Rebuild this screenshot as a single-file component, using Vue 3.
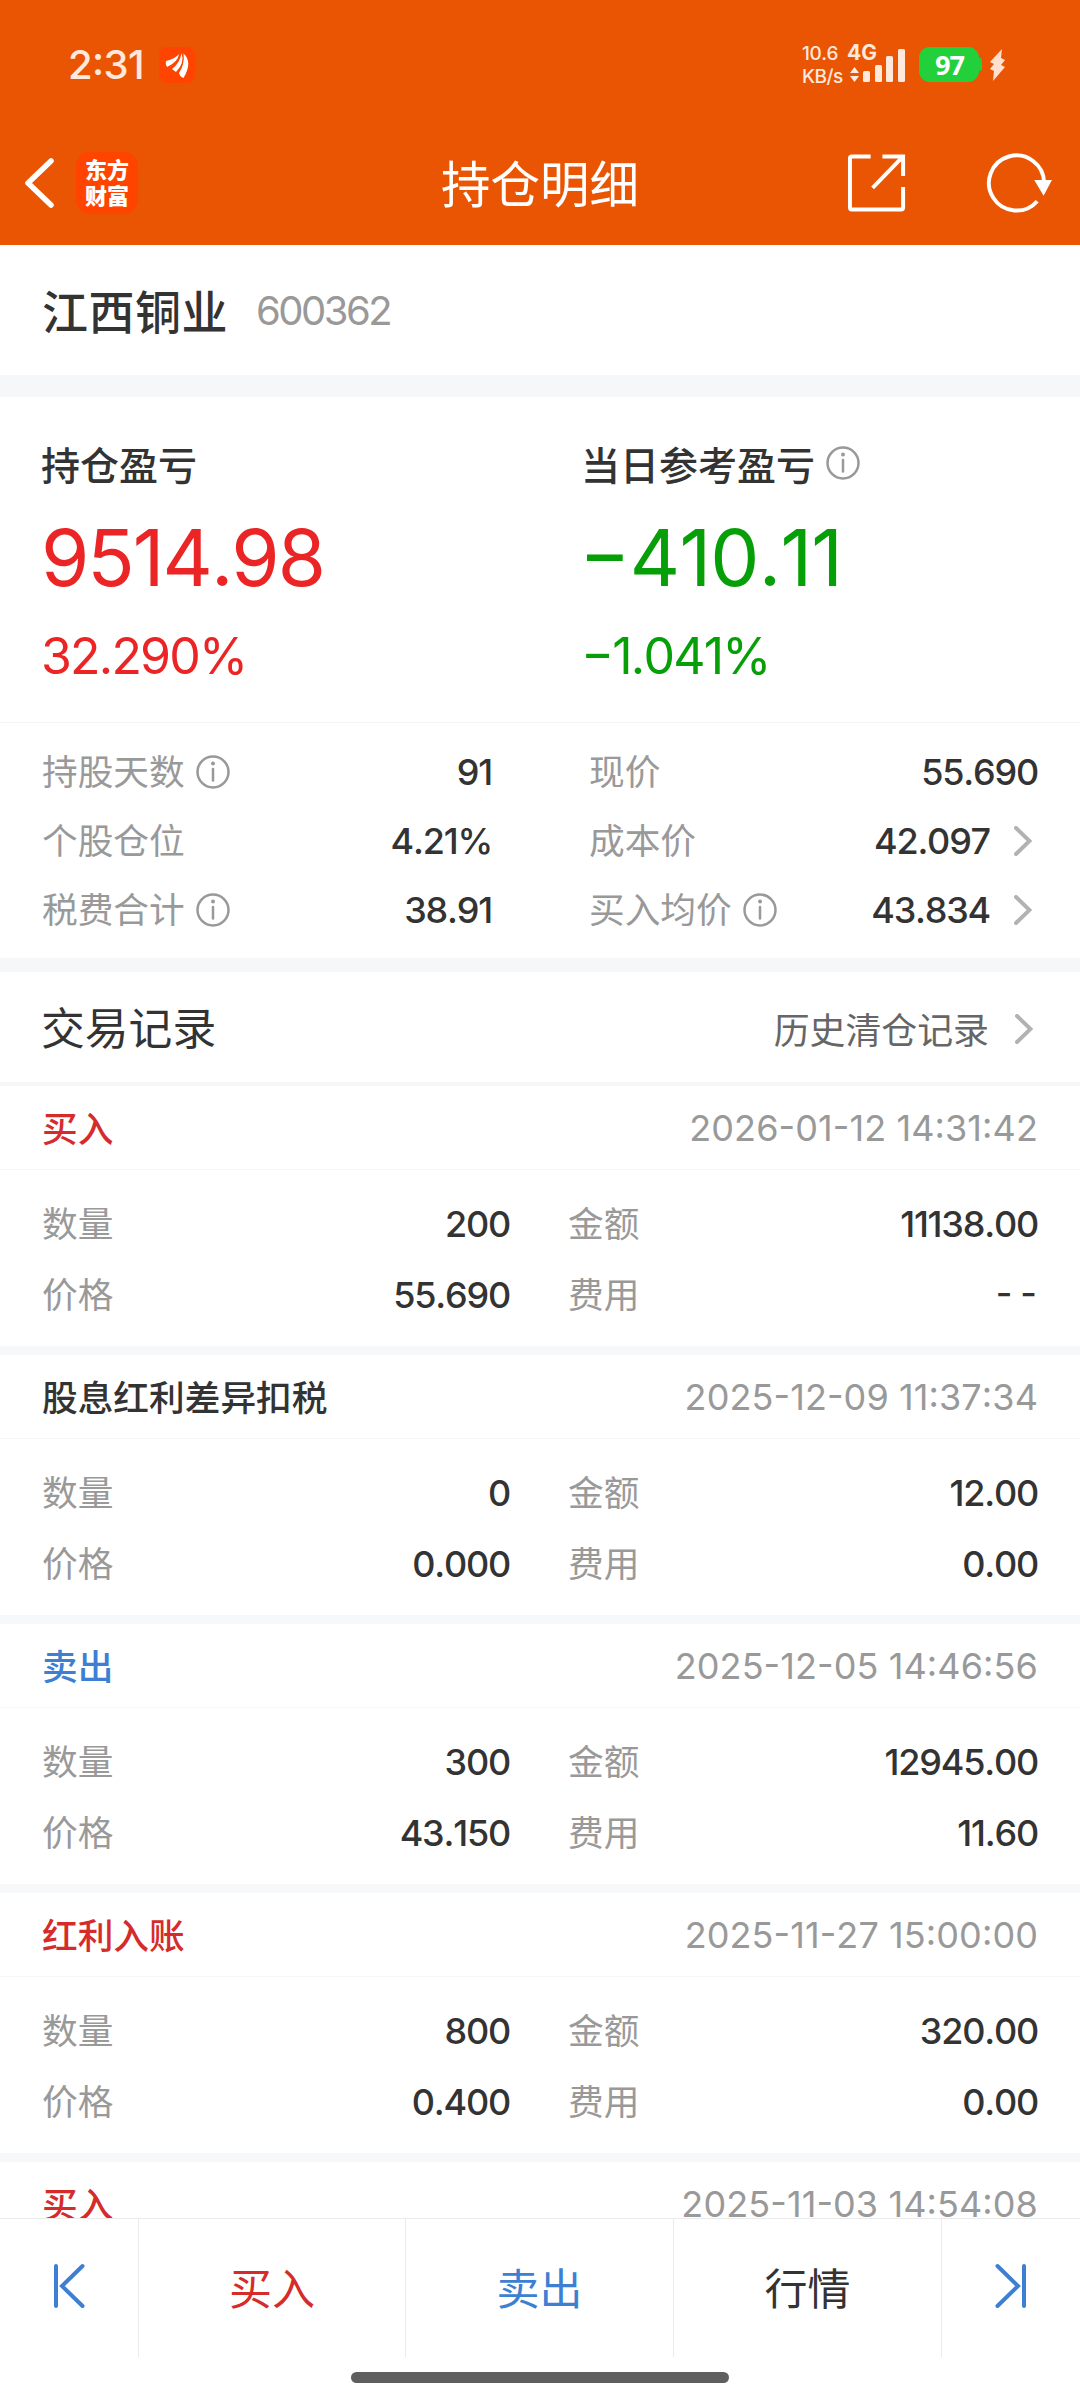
<script setup>
const stats = [
  { label: '持股天数', info: true, value: '91' },
  { label: '现价', value: '55.690' },
  { label: '个股仓位', value: '4.21%' },
  { label: '成本价', value: '42.097', more: true },
  { label: '税费合计', info: true, value: '38.91' },
  { label: '买入均价', info: true, value: '43.834', more: true },
]

const records = [
  { id: 1, name: '买入', type: 'buy', time: '2026-01-12 14:31:42', count: '200', amount: '11138.00', price: '55.690', fee: '--' },
  { id: 2, name: '股息红利差异扣税', type: 'tax', time: '2025-12-09 11:37:34', count: '0', amount: '12.00', price: '0.000', fee: '0.00' },
  { id: 3, name: '卖出', type: 'sell', time: '2025-12-05 14:46:56', count: '300', amount: '12945.00', price: '43.150', fee: '11.60' },
  { id: 4, name: '红利入账', type: 'buy', time: '2025-11-27 15:00:00', count: '800', amount: '320.00', price: '0.400', fee: '0.00' },
  { id: 5, name: '买入', type: 'buy', time: '2025-11-03 14:54:08', count: '', amount: '', price: '', fee: '' },
]
</script>

<template>
  <div class="page">
    <header class="header">
      <div class="status">
        <span class="status__time">2:31</span>
        <svg class="status__app" width="36" height="36" viewBox="0 0 36 36">
          <rect width="36" height="36" rx="8" fill="#ff4400" />
          <path d="M7 14 Q16 12 20 7 Q19 15 8 20 Q6 17 7 14Z M13 22 Q21 16 22.500 6 Q26 16 17 25Z M20 26 Q26 17 24.500 6.500 Q34 15 24.500 31 Q21 30 20 26Z" fill="#fff" />
        </svg>
        <div class="status__right">
          <div class="speed"><span>10.6</span><span>KB/s</span></div>
          <div class="signal">
            <span class="signal__net">4G</span>
            <svg width="60" height="36" viewBox="0 0 60 36">
              <path d="M3 26 L7.500 20 L12 26Z M3 29 L7.500 35 L12 29Z" fill="#ffe9dc" />
              <rect x="16" y="24" width="7" height="11" rx="1.500" fill="#ffe9dc" />
              <rect x="28" y="18" width="7" height="17" rx="1.500" fill="#ffe9dc" />
              <rect x="39" y="9" width="7" height="26" rx="1.500" fill="#ffe9dc" />
              <rect x="51" y="2" width="7" height="33" rx="1.500" fill="#ffe9dc" />
            </svg>
          </div>
          <div class="battery">97</div>
          <svg class="bolt" width="16" height="32" viewBox="0 0 16 32">
            <path d="M12 0 L0 13 L4 15 L0 20 L4 22 L3 32 L15 18 L11 16 L15 11 L11 9Z" fill="#ffe0cf" />
          </svg>
        </div>
      </div>
      <div class="nav">
        <div class="nav__side">
          <svg width="32" height="52" viewBox="0 0 32 52">
            <path d="M28 4 L5 26 L28 48" fill="none" stroke="#fff" stroke-width="5.500" stroke-linecap="round" stroke-linejoin="round" />
          </svg>
          <div class="logo"><span>东方</span><span>财富</span></div>
        </div>
        <h1 class="nav__title">持仓明细</h1>
        <div class="nav__side nav__side_right">
          <svg width="60" height="60" viewBox="0 0 60 60" fill="none" stroke="#fff" stroke-width="4">
            <path d="M24 3 H5 Q3 3 3 5 V55 Q3 57 5 57 H55 Q57 57 57 55 V34" />
            <path d="M36 3 H57 V23 M57 3 L26 35" />
          </svg>
          <svg width="68" height="60" viewBox="0 0 68 60">
            <path d="M59 30 A28 28 0 1 0 52 48.500" fill="none" stroke="#fff" stroke-width="4" />
            <path d="M49 27 H67 L58.500 43Z" fill="#fff" />
          </svg>
        </div>
      </div>
    </header>

    <section class="stock">
      <span class="stock__name">江西铜业</span>
      <span class="stock__code">600362</span>
    </section>

    <section class="profit">
      <div class="profit__item profit__item_up">
        <div class="profit__label">持仓盈亏</div>
        <div class="profit__value">9514.98</div>
        <div class="profit__rate">32.290%</div>
      </div>
      <div class="profit__item profit__item_down">
        <div class="profit__label">
          当日参考盈亏
          <svg class="info" viewBox="0 0 34 34">
            <circle cx="17" cy="17" r="15.500" />
            <path d="M17 14 V25.500" /><circle class="info__dot" cx="17" cy="8.500" r="2" />
          </svg>
        </div>
        <div class="profit__value">−410.11</div>
        <div class="profit__rate">−1.041%</div>
      </div>
    </section>

    <section class="stats">
      <div v-for="item in stats" :key="item.label" class="stats__item">
        <span class="label">{{ item.label }}</span>
        <svg v-if="item.info" class="info" viewBox="0 0 34 34">
          <circle cx="17" cy="17" r="15.500" />
          <path d="M17 14 V25.500" /><circle class="info__dot" cx="17" cy="8.500" r="2" />
        </svg>
        <span class="value">{{ item.value }}</span>
        <svg v-if="item.more" class="arrow" viewBox="0 0 18 30"><path d="M2 2 L15.500 15 L2 28" /></svg>
      </div>
    </section>

    <section class="history">
      <h2 class="history__title">交易记录</h2>
      <span class="history__link">历史清仓记录</span>
      <svg class="arrow" viewBox="0 0 18 30"><path d="M2 2 L15.500 15 L2 28" /></svg>
    </section>

    <main class="records">
      <article v-for="record in records" :key="record.id" class="record">
        <div class="record__head">
          <span class="record__name" :class="'record__name_' + record.type">{{ record.name }}</span>
          <span class="record__time">{{ record.time }}</span>
        </div>
        <div v-if="record.count" class="record__body">
          <span class="label">数量</span><span class="value">{{ record.count }}</span>
          <span class="label label_second">金额</span><span class="value">{{ record.amount }}</span>
          <span class="label">价格</span><span class="value">{{ record.price }}</span>
          <span class="label label_second">费用</span><span class="value" :class="{ value_empty: record.fee === '--' }">{{ record.fee }}</span>
        </div>
      </article>
    </main>

    <footer class="footer">
      <div class="tabs">
        <button class="tab">
          <svg width="32" height="46" viewBox="0 0 32 46"><path d="M3 3 V43 M29.500 3 L9 23 L29.500 43" /></svg>
        </button>
        <button class="tab tab_buy">买入</button>
        <button class="tab tab_sell">卖出</button>
        <button class="tab">行情</button>
        <button class="tab">
          <svg width="32" height="46" viewBox="0 0 32 46"><path d="M29 3 V43 M2.500 3 L23 23 L2.500 43" /></svg>
        </button>
      </div>
      <div class="home"></div>
    </footer>
  </div>
</template>

<style>
body {
  margin: 0;
}
</style>

<style scoped>
.page {
  display: flex;
  flex-direction: column;
  width: 1080px;
  height: 2400px;
  overflow: hidden;
  background-color: #fff;
  color: #333;
  font-family: Inter, "Noto Sans CJK SC", sans-serif;
  font-feature-settings: "case";
  font-kerning: none;
}

.header {
  flex: none;
  height: 245px;
  background-color: #ea5504;
  color: #fff;
}

.status {
  display: flex;
  align-items: center;
  height: 129px;
  padding: 0 74px 0 68px;
  color: #ffe9dc;
}

.status__time {
  width: 91px;
  font-size: 40px;
  font-weight: 500;
  line-height: 48px;
  letter-spacing: -0.6px;
}

.status__right {
  display: flex;
  align-items: center;
  height: 40px;
  margin-left: auto;
}

.speed {
  display: flex;
  flex-direction: column;
  width: 45px;
  font-size: 19px;
  font-weight: 500;
  line-height: 23px;
  letter-spacing: -0.5px;
}

.signal {
  position: relative;
  width: 72px;
  height: 36px;
}

.signal__net {
  position: absolute;
  top: -5px;
  left: 0;
  font-size: 21px;
  font-weight: 700;
  line-height: 22px;
}

.battery {
  position: relative;
  width: 60px;
  height: 35px;
  border-radius: 11px;
  background-color: #22d03c;
  color: #fff;
  font-family: "Noto Sans", sans-serif;
  font-size: 27px;
  font-weight: 700;
  line-height: 36px;
  letter-spacing: -1px;
  text-align: center;
}

.battery:after {
  content: '';
  position: absolute;
  top: 11px;
  right: -3px;
  width: 5px;
  height: 13px;
  border-radius: 3px;
  background-color: #22d03c;
}

.bolt {
  margin-left: 11px;
}

.nav {
  display: flex;
  align-items: center;
  justify-content: space-between;
  height: 108px;
  padding: 0 27px 0 23px;
}

.nav__side {
  display: flex;
  align-items: center;
  gap: 21px;
  width: 206px;
}

.nav__side_right {
  justify-content: flex-end;
  gap: 80px;
}

.nav__title {
  margin: 3px 0 0 4px;
  font-size: 49.5px;
  font-weight: 400;
  line-height: 60px;
}

.logo {
  display: flex;
  flex-direction: column;
  align-items: center;
  justify-content: center;
  width: 62px;
  height: 62px;
  border-radius: 14px;
  background-color: #ff4400;
  font-size: 22px;
  font-weight: 800;
  line-height: 26px;
}

.stock {
  display: flex;
  flex: none;
  align-items: center;
  height: 130px;
  padding: 0 42px;
  border-bottom: 22px solid #f6f7f9;
}

.stock__name {
  margin-top: -3px;
  font-size: 46px;
  font-weight: 500;
  letter-spacing: 0.5px;
}

.stock__code {
  margin-left: 28px;
  color: #999;
  font-size: 40px;
  letter-spacing: -2.5px;
}

.profit {
  display: flex;
  flex: none;
  height: 325px;
  border-bottom: 1px solid #f3f4f5;
}

.profit__item {
  width: 540px;
  padding-top: 41px;
  padding-left: 41px;
}

.profit__label {
  display: flex;
  align-items: center;
  gap: 11px;
  height: 50px;
  font-size: 39px;
  font-weight: 500;
}

.profit__value {
  margin-top: 23px;
  font-size: 78px;
  line-height: 94px;
  letter-spacing: -2px;
}

.profit__rate {
  margin-top: 21px;
  font-size: 50px;
  line-height: 60px;
  letter-spacing: -1.8px;
}

.profit__item_up .profit__value,
.profit__item_up .profit__rate {
  color: #eb2525;
}

.profit__item_down .profit__value,
.profit__item_down .profit__rate {
  color: #079f07;
}

.profit__item_down .profit__value {
  margin-left: -2px;
  letter-spacing: -0.8px;
}

.info {
  flex: none;
  width: 34px;
  height: 34px;
  fill: none;
  stroke: #999;
  stroke-width: 2.5;
  stroke-linecap: round;
}

.info__dot {
  fill: #999;
  stroke: none;
}

.label {
  color: #999;
  font-size: 35.7px;
  line-height: 50px;
}

.value {
  margin-left: auto;
  font-size: 36px;
  font-weight: 500;
  line-height: 50px;
  letter-spacing: -1.2px;
}

.value_empty {
  letter-spacing: 8px;
  margin-right: -7px;
}

.stats {
  display: grid;
  flex: none;
  grid-template-columns: 450px 449px;
  grid-auto-rows: 69px;
  column-gap: 97px;
  height: 207px;
  padding: 14px 42px;
  padding-bottom: 0;
  border-bottom: 14px solid #f6f7f9;
}

.stats {
  height: 221px;
}

.stats__item {
  display: flex;
  align-items: center;
}

.stats__item .info {
  margin-left: 11px;
}

.arrow {
  flex: none;
  width: 18px;
  height: 30px;
  margin-right: 6px;
  margin-left: 24px;
  fill: none;
  stroke: #b2b2b2;
  stroke-width: 4;
  stroke-linecap: round;
}

.history {
  display: flex;
  flex: none;
  align-items: center;
  height: 106px;
  padding: 4px 41px 0;
  border-bottom: 4px solid #f6f7f9;
}

.history__title {
  margin: -7px 0 0;
  font-size: 43.8px;
  font-weight: 400;
}

.history__link {
  margin-top: -2px;
  margin-right: 2px;
  margin-left: auto;
  color: #666;
  font-size: 35.9px;
}

.records {
  flex: 1;
  overflow: hidden;
}

.record {
  height: 260px;
  border-bottom: 9px solid #f6f8fa;
}

.record__head {
  display: flex;
  align-items: center;
  justify-content: space-between;
  height: 83px;
  padding: 0 42px;
  border-bottom: 1px solid #f5f6f7;
  font-size: 36px;
}

.record__name {
  margin-top: -3px;
  font-size: 35.7px;
  font-weight: 500;
}

.record__name_buy {
  color: #d62b2b;
}

.record__name_sell {
  color: #3c7fd3;
}

.record__time {
  color: #999;
  letter-spacing: 0.1px;
}

.record__body {
  display: grid;
  grid-template-columns: 100px 368px 158px 370px;
  grid-auto-rows: 71px;
  align-items: center;
  padding: 18px 42px 0;
}

.label_second {
  padding-left: 58px;
}

.footer {
  flex: none;
  height: 181px;
  border-top: 1px solid #ebebeb;
}

.tabs {
  display: grid;
  grid-template-columns: 139px 267px 268px 268px 138px;
  height: 138px;
}

.tab {
  display: flex;
  align-items: center;
  justify-content: center;
  padding: 0 0 4px;
  border: none;
  border-right: 1px solid #ebebeb;
  background: none;
  color: #333;
  font-family: inherit;
  font-size: 43px;
}

.tab:last-child {
  border-right: none;
}

.tab_buy {
  color: #d62b2b;
}

.tab_sell {
  color: #3c7fd3;
}

.tab svg {
  fill: none;
  stroke: #3c7fd3;
  stroke-width: 4;
  stroke-linecap: round;
}

.home {
  width: 378px;
  height: 11px;
  margin: 15px auto 0;
  border-radius: 6px;
  background-color: #5f5f5f;
}
</style>
